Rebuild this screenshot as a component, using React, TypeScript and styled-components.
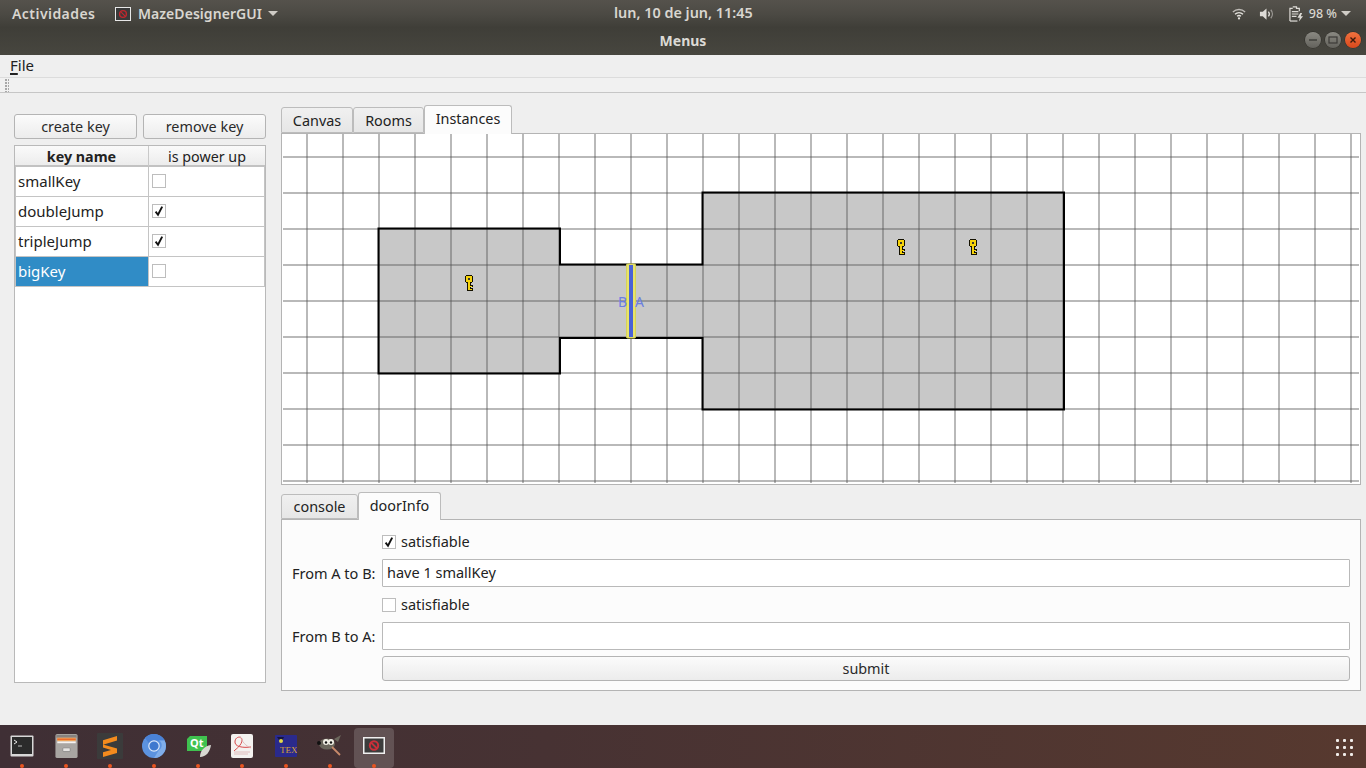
import React from "react";
import styled, { createGlobalStyle } from "styled-components";

const Global = createGlobalStyle`
  html, body { margin: 0; padding: 0; background: #efefef; }
  * { box-sizing: border-box; }
  body { font-family: "Noto Sans", "DejaVu Sans", sans-serif; font-size: 14.5px; color: #2a2a2a; overflow: hidden; }
`;

const Page = styled.div`
  width: 1366px; height: 768px; display: flex; flex-direction: column; background: #efefef;
`;
const Chrome = styled.div`
  height: 55px; display: flex; flex-direction: column;
  background: linear-gradient(180deg, #55524c 0%, #4c4a44 25%, #3f3e38 50%, #47463f 100%);
`;
const TopBar = styled.div`
  height: 27px; display: flex; align-items: center; padding: 0 0 0 12px; position: relative;
  color: #d9d6d0; font-size: 14px; font-weight: 600;
`;
const Activities = styled.span`
  width: 103px; letter-spacing: .45px;
`;
const AppMenu = styled.span`
  display: flex; align-items: center; gap: 7px; letter-spacing: .05px;
`;
const Caret = styled.span`
  width: 0; height: 0; border: 5px solid transparent; border-top: 5px solid #cfccc6; border-bottom: 0; margin-left: -1px;
`;
const Clock = styled.span`
  position: absolute; left: 614px; top: 3px; font-weight: 600; font-size: 14.4px; white-space: nowrap;
`;
const Tray = styled.div`
  margin-left: auto; display: flex; align-items: center; color: #d9d6d0; padding-right: 15px;
`;
const TrayText = styled.span`
  font-size: 12.5px; font-weight: 500; margin: 0 5px; white-space: nowrap;
`;
const TitleBar = styled.div`
  height: 28px; display: flex; align-items: center; justify-content: center; position: relative;
  color: #dcdad5; font-size: 14px; font-weight: 700; padding-bottom: 2px;
`;
const WindowButtons = styled.div`
  position: absolute; right: 5px; top: 5px; display: flex; gap: 4px;
`;
const WindowButton = styled.span<{ $close?: boolean }>`
  width: 16px; height: 16px; border-radius: 50%; display: flex; align-items: center; justify-content: center;
  background: ${(p) => (p.$close ? "linear-gradient(#f0723f,#d9481c)" : "linear-gradient(#8a8982,#63625c)")};
  box-shadow: 0 0 0 .5px rgba(0,0,0,.35);
`;
const MenuBar = styled.div`
  height: 22px; background: #efefef; display: flex; align-items: center; padding: 0 0 2px 10px; font-size: 15px; color: #222;
`;
const Mnemonic = styled.span`
  text-decoration: underline; text-decoration-thickness: 1.5px; text-underline-offset: 2px;
`;
const ToolBar = styled.div`
  height: 16px; background: #f1f1f1; border-top: 1px solid #dcdcdc; border-bottom: 1px solid #c6c6c6; padding: 1px 0 0 5px;
`;
const Grip = styled.div`
  width: 4px; height: 13px;
  background-image: radial-gradient(circle at 1px 1px, #a8a8a8 .8px, transparent 1px);
  background-size: 3px 3px;
`;
const Main = styled.main`
  flex: 1; display: flex; gap: 15px; padding: 12px 5px 34px 14px; min-height: 0;
`;
const LeftColumn = styled.section`
  width: 252px; display: flex; flex-direction: column; gap: 6px; padding: 9px 0 8px;
`;
const ButtonRow = styled.div`
  display: flex; justify-content: space-between; height: 25px;
`;
const PushButton = styled.button<{ $wide?: boolean }>`
  width: ${(p) => (p.$wide ? "100%" : "123px")}; height: 25px; padding: 0; border: 1px solid #b4b4b4; border-radius: 3px;
  font: 400 14.4px "Noto Sans", sans-serif; color: #2a2a2a;
  background: linear-gradient(180deg, #fbfbfb, #ececec);
`;
const TableFrame = styled.div`
  flex: 1; background: #fff; border: 1px solid #b9b9b9; display: flex; flex-direction: column;
`;
const TableHeader = styled.div`
  display: grid; grid-template-columns: 134px 1fr; height: 21px; background: linear-gradient(180deg, #fafafa, #ececec);
  border-bottom: 2px solid #c2c2c2;
`;
const HeaderCell = styled.div<{ $bold?: boolean }>`
  display: flex; align-items: center; justify-content: center; font-size: 14.3px; padding-top: 1px;
  font-weight: ${(p) => (p.$bold ? 700 : 400)}; color: #222;
  &:first-child { border-right: 1px solid #c9c9c9; }
`;
const TableRow = styled.div`
  display: grid; grid-template-columns: 133px 116px; height: 30px; border-bottom: 1px solid #c4c4c4;
  border-left: 1px solid #c4c4c4;
`;
const NameCell = styled.div<{ $selected?: boolean }>`
  display: flex; align-items: center; padding: 0 0 2px 2px; font-size: 15px; border-right: 1px solid #c4c4c4;
  background: ${(p) => (p.$selected ? "#308cc6" : "#fff")}; color: ${(p) => (p.$selected ? "#fff" : "#222")};
`;
const CheckCell = styled.div`
  display: flex; align-items: center; padding: 0 0 1px 3px; border-right: 1px solid #c4c4c4;
`;
const CheckBox = styled.span`
  width: 14px; height: 14px; border: 1px solid #bdbdbd; background: #fff; display: flex; align-items: center; justify-content: center; flex: none;
`;
const RightColumn = styled.section`
  width: 1080px; display: flex; flex-direction: column;
`;
const TabBar = styled.div`
  display: flex; align-items: flex-end; height: 28px;
`;
const Tab = styled.div<{ $active?: boolean; $w: number; $low?: boolean }>`
  width: ${(p) => p.$w}px; height: ${(p) => (p.$active ? 29 : 26) - (p.$low ? 1 : 0)}px; margin-bottom: ${(p) => (p.$active ? -1 : 0)}px;
  display: flex; align-items: center; justify-content: center; font-size: 14.4px; color: #222; position: relative; z-index: ${(p) => (p.$active ? 2 : 0)};
  padding-bottom: ${(p) => (p.$active ? 3 : 0)}px;
  border: 1px solid #bcbcbc; border-bottom: ${(p) => (p.$active ? "0" : "1px solid #bcbcbc")}; border-radius: 3px 3px 0 0;
  background: ${(p) => (p.$active ? "#fcfcfc" : "linear-gradient(180deg,#f0f0f0,#e6e6e6)")};
`;
const CanvasPane = styled.div`
  height: 352px; border: 1px solid #b4b4b4; background: #fff; display: flex;
`;
const BottomTabs = styled(TabBar)`
  margin-top: 6px;
`;
const DoorPane = styled.div`
  flex: 1; border: 1px solid #b4b4b4; background: #fcfcfc; padding: 12px 10px 9px;
  display: grid; grid-template-columns: 90px 1fr; grid-template-rows: 19px 28px 19px 28px 23px; row-gap: 8px;
`;
const CheckLine = styled.label`
  grid-column: 2; display: flex; align-items: center; gap: 5px; font-size: 14.5px; color: #222;
`;
const CheckText = styled.span`
  margin-top: -2px;
`;
const FieldLabel = styled.span`
  display: flex; align-items: center; font-size: 14.5px; color: #222; white-space: nowrap;
`;
const TextField = styled.input`
  width: 100%; height: 28px; border: 1px solid #b9b9b9; background: #fff; padding: 0 4px 2px; outline: none; border-radius: 1px;
  font: 400 14.5px "Noto Sans", sans-serif; color: #222;
`;
const SubmitCell = styled.div`
  grid-column: 2; margin-top: -2px;
`;
const Dock = styled.nav`
  height: 43px; background: linear-gradient(90deg, #3f2f35 0%, #473233 40%, #57392f 100%);
  display: flex; align-items: center; padding: 2px 0 0 2px; position: relative;
`;
const DockItem = styled.div<{ $active?: boolean }>`
  width: 40px; height: 40px; margin-right: 4px; border-radius: 4px; display: flex; justify-content: center; align-items: center; position: relative; padding-bottom: 4px;
  background: ${(p) => (p.$active ? "rgba(255,255,255,.16)" : "transparent")};
  &::after { content: ""; position: absolute; left: 18px; bottom: 0; width: 4px; height: 4px; border-radius: 50%; background: #e95420; }
`;
const AppGrid = styled.div`
  position: absolute; right: 13px; top: 14px; display: grid; grid-template-columns: repeat(3, 3px); grid-auto-rows: 3px; gap: 4px;
`;
const AppDot = styled.span`
  background: #f0ece9; border-radius: 1px;
`;

const Check = () => (
  <svg width="12" height="12" viewBox="0 0 12 12">
    <path d="M2.6 6.6 L5 9.8 L9.2 1.6" fill="none" stroke="#111" strokeWidth="1.9" />
  </svg>
);
const Box = ({ on }: { on?: boolean }) => <CheckBox>{on && <Check />}</CheckBox>;

const Key = ({ x, y }: { x: number; y: number }) => (
  <g transform={`translate(${x} ${y})`} shapeRendering="crispEdges">
    <path d="M-3 -8h6v1h1v6h-1v1h-1v2h2v2h-2v1h2v3h-6v-8h-1v-1h-1v-6h1z" fill="#141100" />
    <path d="M-3 -7h6v6h-2v8h-2v-8h-2z" fill="#f6d30c" />
    <rect x="1" y="3" width="2" height="1" fill="#f6d30c" />
    <rect x="1" y="6" width="2" height="1" fill="#f6d30c" />
    <rect x="-1" y="-5" width="2" height="2" fill="#3a3a30" />
  </g>
);

const Grid = () => {
  const vs = Array.from({ length: 30 }, (_, i) => 307 + i * 36);
  const hs = Array.from({ length: 10 }, (_, i) => 157 + i * 36);
  return (
    <g stroke="rgba(80,80,80,.4)">
      {vs.map((x) => <line key={x} x1={x} x2={x} y1={134} y2={483} strokeWidth="2" />)}
      {hs.map((y) => <line key={y} x1={283} x2={1359} y1={y} y2={y} strokeWidth="2" />)}
    </g>
  );
};

const roomPath = "M378.5 228.5H560V264.5H702.5V192.5H1064V409.5H702.5V338H560V373.5H378.5Z";

const MazeCanvas = () => (
  <svg width="1078" height="350" viewBox="282 134 1078 350">
    <path d={roomPath} fill="#c8c8c8" />
    <Grid />
    <path d={roomPath} fill="none" stroke="#000" strokeWidth="2" />
    <rect x="626.5" y="264" width="9" height="74" rx="1" fill="#e8e46a" stroke="#d6d25a" />
    <rect x="629" y="265" width="4" height="72" fill="#4a62d8" />
    <text x="618" y="307" fontSize="14" fontFamily="Noto Sans, sans-serif" fill="#6b7fe0">B</text>
    <text x="635" y="307" fontSize="14" fontFamily="Noto Sans, sans-serif" fill="#6b7fe0">A</text>
    <Key x={469} y={283} />
    <Key x={901} y={247} />
    <Key x={973} y={247} />
  </svg>
);

const AppBadge = ({ size = 14 }: { size?: number }) => (
  <svg width={size + 2} height={size} viewBox="0 0 16 14">
    <rect x=".5" y=".5" width="15" height="13" fill="#3a3a3a" stroke="#e8e8e8" />
    <circle cx="8" cy="7" r="3.4" fill="none" stroke="#c0272d" strokeWidth="1.4" />
    <path d="M5.6 4.6l4.8 4.8" stroke="#c0272d" strokeWidth="1.2" />
  </svg>
);

const Wifi = () => (
  <svg width="14" height="14" viewBox="0 0 16 14" fill="none" stroke="#e4e2dd" strokeWidth="1.6">
    <path d="M1 4.6C5 1 11 1 15 4.6" opacity=".75" />
    <path d="M3.4 7.2C6 5 10 5 12.6 7.2" />
    <path d="M5.8 9.6C7 8.6 9 8.6 10.2 9.6" />
    <circle cx="8" cy="12" r="1.3" fill="#e4e2dd" stroke="none" />
  </svg>
);
const Speaker = () => (
  <svg width="15" height="14" viewBox="0 0 16 14" style={{ marginLeft: 13 }} fill="none">
    <path d="M1 4.5h3L8 1v12L4 9.5H1z" fill="#dddbd6" />
    <path d="M10 4.5c1.2 1.4 1.2 3.6 0 5" stroke="#dddbd6" strokeWidth="1.4" />
    <path d="M12.6 2.5c2.2 2.6 2.2 6.4 0 9" stroke="#9b9994" strokeWidth="1.4" />
  </svg>
);
const Battery = () => (
  <svg width="15" height="18" viewBox="0 0 16 18" style={{ marginLeft: 15 }} fill="none">
    <path d="M4 1.5h4v1.5h3v3M1 16.5V3h3" stroke="#dddbd6" strokeWidth="1.3" />
    <path d="M1 16.5h8" stroke="#dddbd6" strokeWidth="1.3" />
    <path d="M3 6.5h7M3 9h7M3 11.5h5" stroke="#dddbd6" strokeWidth="1.3" />
    <path d="M12 8l-3 5h2.5L10.5 17l4.5-5.5h-2.5L14 8z" fill="#dddbd6" />
  </svg>
);

const TerminalIcon = () => (
  <svg width="24" height="22" viewBox="0 0 24 22">
    <rect x=".5" y=".5" width="23" height="21" rx="1" fill="#d8d8d8" />
    <rect x="2" y="2" width="20" height="17" fill="#2b2b2b" />
    <path d="M4 5l3 2-3 2" fill="none" stroke="#e8e8e8" />
    <path d="M8 11h4" stroke="#bbb" />
  </svg>
);
const FilesIcon = () => (
  <svg width="23" height="24" viewBox="0 0 24 26">
    <rect x="0" y="0" width="24" height="26" rx="2" fill="#a9a6a3" />
    <rect x="1" y="1" width="22" height="3" fill="#86827f" />
    <rect x="2" y="4" width="20" height="4" fill="#f0a35a" />
    <rect x="2" y="5" width="20" height="1.4" fill="#e8662b" />
    <rect x="2" y="8" width="20" height="2" fill="#f5f3f1" />
    <rect x="8" y="15" width="8" height="4" rx="1" fill="#e6e4e2" stroke="#777" strokeWidth=".7" />
  </svg>
);
const SublimeIcon = () => (
  <svg width="26" height="26" viewBox="0 0 26 26">
    <rect width="26" height="26" rx="1" fill="#3b3b3b" />
    <path d="M20 4.5v4.6L6 13.3V8.7zM6 13l14 4v4.6L6 25.5v-4.7l8-2.4L6 16z" fill="#f48b1e" transform="translate(0 -1.5)" />
  </svg>
);
const ChromeIcon = () => (
  <svg width="24" height="24" viewBox="0 0 24 24">
    <circle cx="12" cy="12" r="12" fill="#5c93e0" />
    <path d="M12 0a12 12 0 0 1 10.6 6.5H12a5.5 5.5 0 0 0-5 3L3 3.8A12 12 0 0 1 12 0z" fill="#4a82d6" />
    <path d="M22.6 6.5A12 12 0 0 1 12 24l5-8a5.5 5.5 0 0 0 0-9.5z" fill="#80aeea" />
    <circle cx="12" cy="12" r="5.2" fill="#3f79cf" stroke="#dbe8fa" strokeWidth="1.2" />
  </svg>
);
const QtIcon = () => (
  <svg width="24" height="24" viewBox="0 0 24 24" style={{ marginLeft: 1 }}>
    <path d="M3 2h17v12l-3 3H0V5z" fill="#3fc24f" />
    <text x="3" y="13" fontSize="11" fontWeight="700" fontFamily="Noto Sans, sans-serif" fill="#fff">Qt</text>
    <path d="M24 11c-1 7-5 12-11 12 0-6 4-11 11-12z" fill="#d8d8d2" />
  </svg>
);
const EvinceIcon = () => (
  <svg width="22" height="24" viewBox="0 0 22 24">
    <rect width="22" height="24" rx="2" fill="#f4f2f0" />
    <path d="M20 13C12 14 3 13 4 7c1-5 7-5 7-1 0 5-6 9-8 11" fill="none" stroke="#d8484a" strokeWidth="1" />
    <path d="M9 2c2 6 6 10 11 12M3 18h16M3 20h14" fill="none" stroke="#dcb0b0" strokeWidth=".8" />
  </svg>
);
const TexIcon = () => (
  <svg width="22" height="22" viewBox="0 0 22 22">
    <rect width="22" height="22" rx="1" fill="#2a2a8c" />
    <path d="M2 2h7l-3 6z" fill="#15153e" />
    <circle cx="6" cy="6" r="2" fill="#e4d94a" />
    <text x="5" y="18" fontSize="9" fontFamily="Liberation Serif, serif" fill="#d9a23a">TEX</text>
  </svg>
);
const GimpIcon = () => (
  <svg width="26" height="22" viewBox="0 0 26 22">
    <ellipse cx="10" cy="9" rx="8" ry="5.5" fill="#6b675c" />
    <circle cx="9" cy="7" r="3" fill="#f2f0e6" />
    <circle cx="14" cy="7" r="3" fill="#f2f0e6" />
    <circle cx="9" cy="7.5" r="1.2" fill="#111" />
    <circle cx="14" cy="7.5" r="1.2" fill="#111" />
    <circle cx="2" cy="8" r="2" fill="#111" />
    <path d="M15 12l8 8" stroke="#c98a6a" strokeWidth="1.8" />
    <path d="M17 4l7-4-3 7z" fill="#6b675c" />
  </svg>
);
const ActiveAppIcon = () => (
  <svg width="22" height="17" viewBox="0 0 22 17">
    <rect x=".75" y=".75" width="20.5" height="15.5" fill="#3c3c3c" stroke="#f0f0f0" strokeWidth="1.5" />
    <circle cx="11" cy="8.5" r="4.2" fill="none" stroke="#c9303a" strokeWidth="2" />
    <path d="M8 5.5l6 6" stroke="#c9303a" strokeWidth="1.8" />
  </svg>
);

const keys = [
  { name: "smallKey", on: false },
  { name: "doubleJump", on: true },
  { name: "tripleJump", on: true },
  { name: "bigKey", on: false, selected: true },
];

export default function App() {
  return (
    <Page>
      <Global />
      <Chrome>
        <TopBar>
          <Activities>Actividades</Activities>
          <AppMenu>
            <AppBadge />
            MazeDesignerGUI
            <Caret />
          </AppMenu>
          <Clock>lun, 10 de jun, 11:45</Clock>
          <Tray>
            <Wifi />
            <Speaker />
            <Battery />
            <TrayText>98 %</TrayText>
            <Caret />
          </Tray>
        </TopBar>
        <TitleBar>
          Menus
          <WindowButtons>
            <WindowButton>
              <svg width="10" height="10" viewBox="0 0 10 10"><path d="M1 5h8" stroke="#3c3b37" strokeWidth="1.4" /></svg>
            </WindowButton>
            <WindowButton>
              <svg width="10" height="10" viewBox="0 0 10 10"><rect x="1" y="2" width="8" height="6" fill="none" stroke="#3c3b37" strokeWidth="1.2" /></svg>
            </WindowButton>
            <WindowButton $close>
              <svg width="10" height="10" viewBox="0 0 10 10"><path d="M2.5 2.5l5 5M7.5 2.5l-5 5" stroke="#3a1a0c" strokeWidth="1.4" /></svg>
            </WindowButton>
          </WindowButtons>
        </TitleBar>
      </Chrome>
      <MenuBar><span><Mnemonic>F</Mnemonic>ile</span></MenuBar>
      <ToolBar><Grip /></ToolBar>
      <Main>
        <LeftColumn>
          <ButtonRow>
            <PushButton>create key</PushButton>
            <PushButton>remove key</PushButton>
          </ButtonRow>
          <TableFrame>
            <TableHeader>
              <HeaderCell $bold>key name</HeaderCell>
              <HeaderCell>is power up</HeaderCell>
            </TableHeader>
            {keys.map((k) => (
              <TableRow key={k.name}>
                <NameCell $selected={k.selected}>{k.name}</NameCell>
                <CheckCell><Box on={k.on} /></CheckCell>
              </TableRow>
            ))}
          </TableFrame>
        </LeftColumn>
        <RightColumn>
          <TabBar>
            <Tab $w={72}>Canvas</Tab>
            <Tab $w={71}>Rooms</Tab>
            <Tab $w={88} $active>Instances</Tab>
          </TabBar>
          <CanvasPane><MazeCanvas /></CanvasPane>
          <BottomTabs>
            <Tab $w={77} $low>console</Tab>
            <Tab $w={83} $active $low>doorInfo</Tab>
          </BottomTabs>
          <DoorPane>
            <CheckLine><Box on /><CheckText>satisfiable</CheckText></CheckLine>
            <FieldLabel>From A to B:</FieldLabel>
            <TextField readOnly value="have 1 smallKey" />
            <CheckLine><Box /><CheckText>satisfiable</CheckText></CheckLine>
            <FieldLabel>From B to A:</FieldLabel>
            <TextField readOnly value="" />
            <SubmitCell><PushButton $wide>submit</PushButton></SubmitCell>
          </DoorPane>
        </RightColumn>
      </Main>
      <Dock>
        <DockItem><TerminalIcon /></DockItem>
        <DockItem><FilesIcon /></DockItem>
        <DockItem><SublimeIcon /></DockItem>
        <DockItem><ChromeIcon /></DockItem>
        <DockItem><QtIcon /></DockItem>
        <DockItem><EvinceIcon /></DockItem>
        <DockItem><TexIcon /></DockItem>
        <DockItem><GimpIcon /></DockItem>
        <DockItem $active><ActiveAppIcon /></DockItem>
        <AppGrid>{Array.from({ length: 9 }, (_, i) => <AppDot key={i} />)}</AppGrid>
      </Dock>
    </Page>
  );
}
